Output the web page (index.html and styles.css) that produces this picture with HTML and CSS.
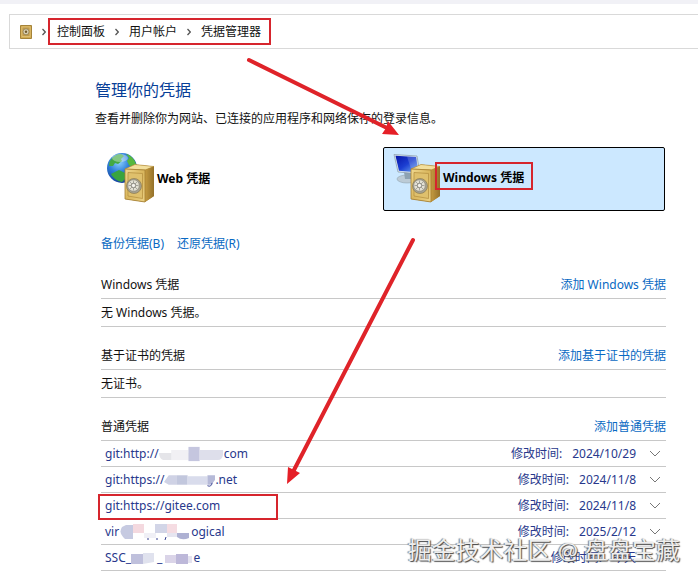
FILE: index.html
```html
<!DOCTYPE html>
<html lang="zh-CN">
<head>
<meta charset="utf-8">
<title>凭据管理器</title>
<link rel="stylesheet" href="styles.css">
</head>
<body>
<svg class="defs" aria-hidden="true">
  <defs>
    <linearGradient id="gold" x1="0" y1="0" x2="1" y2="1"><stop offset="0" stop-color="#f0d990"/><stop offset=".5" stop-color="#d9b65c"/><stop offset="1" stop-color="#ecd286"/></linearGradient>
    <linearGradient id="side" x1="0" y1="0" x2="1" y2="0"><stop offset="0" stop-color="#c59b40"/><stop offset="1" stop-color="#94712a"/></linearGradient>
    <radialGradient id="sea" cx=".4" cy=".3" r=".75"><stop offset="0" stop-color="#8fd4ff"/><stop offset=".45" stop-color="#2f7fd8"/><stop offset="1" stop-color="#123a94"/></radialGradient>
    <linearGradient id="screen" x1="0" y1="0" x2="1" y2="1"><stop offset="0" stop-color="#0714a8"/><stop offset=".5" stop-color="#1c3fd2"/><stop offset="1" stop-color="#78b4f4"/></linearGradient>
    <g id="safe">
      <path d="M18 17 28 12.500 47 14.500V44L38 50 18 47Z" fill="#a67d2a"/>
      <path d="M18 17 28 12.500 47 14.500 38 18Z" fill="#f2df9d" stroke="#b18a38" stroke-width=".6"/>
      <path d="M38 18 47 14.500V44L38 50Z" fill="url(#side)"/>
      <path d="M18 17 38 18V50L18 47Z" fill="url(#gold)" stroke="#a57f34" stroke-width=".8"/>
      <path d="M21 20.500 35.500 21.500V46.500L21 44Z" fill="#dfc06c" stroke="#b28d3c" stroke-width=".7"/>
      <circle cx="27" cy="34" r="7.500" fill="#a5a190" stroke="#8d7a4d" stroke-width=".7"/>
      <circle cx="26.500" cy="33.500" r="5.800" fill="#e2e0d4" stroke="#8e897a" stroke-width=".7"/>
      <path d="M26.500 28.500V38.500M21.500 33.500H31.500M23 30 30 37M30 30 23 37" stroke="#8d8c85" stroke-width=".7"/>
      <circle cx="26.500" cy="33.500" r="2.200" fill="#f4f3ed" stroke="#76746b" stroke-width=".8"/>
    </g>
  </defs>
</svg>

<header class="address">
  <svg class="address-icon" viewBox="0 0 12 14" aria-hidden="true"><path d="M.5.5h11v13H.5Z" fill="#d2ac52" stroke="#a58339"/><path d="M2 2h8v9.500H2Z" fill="#c09b49" stroke="#e8cf8b" stroke-width=".6"/><circle cx="6" cy="6.800" r="3" fill="#d9cfb1" stroke="#8b784c" stroke-width=".7"/><circle cx="6" cy="6.800" r="1.200" fill="#725b2b"/></svg>
  <svg class="crumb-sep" viewBox="0 0 4 8" aria-hidden="true"><path d="M.5 1 3.300 4 .5 7"/></svg>
  <nav class="crumbs marked" aria-label="路径">
    <a href="#">控制面板</a>
    <svg class="crumb-sep" viewBox="0 0 4 8" aria-hidden="true"><path d="M.5 1 3.300 4 .5 7"/></svg>
    <a href="#">用户帐户</a>
    <svg class="crumb-sep" viewBox="0 0 4 8" aria-hidden="true"><path d="M.5 1 3.300 4 .5 7"/></svg>
    <a href="#">凭据管理器</a>
  </nav>
</header>

<main class="content">
  <h1>管理你的凭据</h1>
  <p class="intro">查看并删除你为网站、已连接的应用程序和网络保存的登录信息。</p>

  <div class="tiles">
    <button class="tile" type="button">
      <svg class="tile-icon" viewBox="0 0 48 54" aria-hidden="true">
        <circle cx="15" cy="16" r="15" fill="url(#sea)"/>
        <path d="M2.500 10C5 5 9 2 14 2L17 4 14 7 15 9 11 12 8 11 6 14 2 14Z" fill="#43a944"/>
        <path d="M19 2C24 3 28 8 29.500 13L26 16 22 13 20 9 22 6Z" fill="#56b83f"/>
        <path d="M6 21 12 18 18 21 20 25 15 30C10 29 6 26 4 22Z" fill="#39a43e"/>
        <ellipse cx="13" cy="6" rx="8" ry="4" fill="#fff" opacity=".35"/>
        <use href="#safe"/>
      </svg>
      <span class="tile-label">Web 凭据</span>
    </button>
    <button class="tile selected" type="button">
      <svg class="tile-icon" viewBox="0 0 48 54" aria-hidden="true">
        <ellipse cx="14" cy="27" rx="10" ry="4" fill="#bccbd6" stroke="#92a4b0" stroke-width=".6"/>
        <path d="M11 20h7l2 7h-8Z" fill="#8da2b2"/>
        <path d="M1 2.500 24 4 27 22 5 20Z" fill="#d9e4ed" stroke="#8799a8" stroke-width=".7"/>
        <path d="M2.500 3.800 23 5 25.500 20.500 6 18.700Z" fill="url(#screen)"/>
        <path d="M14 4.500 23 5 25.500 20.500 19 20Z" fill="#fff" opacity=".17"/>
        <use href="#safe"/>
      </svg>
      <span class="tile-label marked">Windows 凭据</span>
    </button>
  </div>

  <div class="lists">
    <div class="actions"><a href="#">备份凭据(B)</a><a href="#">还原凭据(R)</a></div>

    <section>
      <div class="list-head"><h2>Windows 凭据</h2><a href="#">添加 Windows 凭据</a></div>
      <p class="empty">无 Windows 凭据。</p>
    </section>
    <section>
      <div class="list-head"><h2>基于证书的凭据</h2><a href="#">添加基于证书的凭据</a></div>
      <p class="empty">无证书。</p>
    </section>
    <section>
      <div class="list-head"><h2>普通凭据</h2><a href="#">添加普通凭据</a></div>
      <ul class="entries">
        <li class="entry">
          <span class="name">git:http://<svg class="mosaic wide" viewBox="0 0 64 14" aria-hidden="true"><path d="M0 6h29v7H4Q0 11 0 6Z" fill="#e5e5e9"/><path d="M12 3h17v10H12Z" fill="#f1f0f4"/><path d="M29 0h11v14H29Z" fill="#c5c6df"/><path d="M40 3h23v5q-1 5-5 5H40Z" fill="#dedfeb"/></svg>com</span>
          <span class="label">修改时间:</span><time>2024/10/29</time>
          <button class="expand" type="button" aria-label="展开"><svg viewBox="0 0 12 8" aria-hidden="true"><path d="M1 1 6 6 11 1"/></svg></button>
        </li>
        <li class="entry">
          <span class="name">git:https://<svg class="mosaic medium" viewBox="0 0 54 14" aria-hidden="true"><path d="M5 2h8v10H5L0 9Z" fill="#cfd2e5"/><path d="M13 2h12v10H13Z" fill="#c2c7dd"/><path d="M25 3h21v9H25Z" fill="#d9dcec"/><path d="M46 2h8v5l-4 5h-4Z" fill="#b6bad8"/><path d="M46 13q4 2 5-3" fill="none" stroke="#353f91"/></svg>.net</span>
          <span class="label">修改时间:</span><time>2024/11/8</time>
          <button class="expand" type="button" aria-label="展开"><svg viewBox="0 0 12 8" aria-hidden="true"><path d="M1 1 6 6 11 1"/></svg></button>
        </li>
        <li class="entry highlighted">
          <span class="name">git:https://gitee.com</span>
          <span class="label">修改时间:</span><time>2024/11/8</time>
          <button class="expand" type="button" aria-label="展开"><svg viewBox="0 0 12 8" aria-hidden="true"><path d="M1 1 6 6 11 1"/></svg></button>
        </li>
        <li class="entry">
          <span class="name">vir<svg class="mosaic widest" viewBox="0 0 70 16" aria-hidden="true"><path d="M6 1h7v14H5Q-2 9 2 3Z" fill="#c6cae1"/><path d="M13 0h11v9H13Z" fill="#f4d9df"/><path d="M24 9h12v5H24Z" fill="#f0f0f6"/><path d="M35 0h12v9H35Z" fill="#d2d5e7"/><path d="M47 0h10v9H47Z" fill="#f5dce2"/><path d="M47 9h10v4H47Z" fill="#e6e5f0"/><path d="M57 9h12v5q-7 3-12-1Z" fill="#aeb1d3"/><path d="M28 14v2M37 14v2M46 13l-1 3" stroke="#353f91"/></svg>ogical</span>
          <span class="label">修改时间:</span><time>2025/2/12</time>
          <button class="expand" type="button" aria-label="展开"><svg viewBox="0 0 12 8" aria-hidden="true"><path d="M1 1 6 6 11 1"/></svg></button>
        </li>
        <li class="entry">
          <span class="name">SSC_<svg class="mosaic small" viewBox="0 0 26 14" aria-hidden="true"><path d="M0 3h12v10H0Z" fill="#bfc0dc"/><path d="M12 2h11v9l-11 2Z" fill="#e0e2ee"/></svg>_<svg class="mosaic small-wide" viewBox="0 0 31 14" aria-hidden="true"><path d="M3 4h11v8H3Z" fill="#dad4e8"/><path d="M14 3h12v10H14Z" fill="#bdb8d9"/><path d="M26 5h4v7h-4Z" fill="#e4e2ef"/></svg>e</span>
          <span class="label">修改时间:</span><time>今天</time>
          <span class="expand"></span>
        </li>
      </ul>
    </section>
  </div>
</main>

<svg class="arrows" viewBox="0 0 698 582" aria-hidden="true">
  <path class="shaft" d="M249 60 387 128M413 240 294 470"/>
  <path class="head" d="M399 135 382 134 386 128 388 121ZM287 484 288 467 294 470 300 473Z"/>
</svg>
<div class="watermark">掘金技术社区 @ 盘盘宝藏</div>
</body>
</html>
```
FILE: styles.css
```css
*, *::after { box-sizing: border-box; }

body {
  position: relative;
  margin: 0;
  border-top: 4px solid #f1f1f6;
  background: #fff;
  color: #111;
  font: 12px/20px "Noto Sans", "Noto Sans CJK SC", sans-serif;
  overflow-x: hidden;
}

h1, h2, p, ul { margin: 0; padding: 0; font-size: 12px; font-weight: 400; }
a { color: #0869c3; text-decoration: none; }
button { font: inherit; color: inherit; }
.defs { position: absolute; width: 0; height: 0; }
.marked { border: 2px solid #d6252d; }

.address {
  display: flex;
  align-items: center;
  height: 35px;
  margin: 10px 0 0 9px;
  padding-left: 10px;
  border: 1px solid #d9d9d9;
  border-right: 0;
}
.address-icon { width: 12px; height: 14px; margin-right: 10px; }
.crumb-sep { width: 4px; height: 8px; fill: none; stroke: #555; stroke-width: 1.3; }
.crumbs {
  display: flex;
  align-items: center;
  gap: 10px;
  height: 27px;
  margin-left: 2px;
  padding: 0 8px 0 7px;
}
.crumbs a { color: #111; }

.content { padding: 29px 32px 11px 95px; }
h1 { color: #073e97; font-size: 16px; line-height: 24px; }
.intro { margin-top: 7px; }

.tiles {
  display: grid;
  grid-template-columns: 1fr 1fr;
  gap: 4px;
  margin: 18px 1px 0 2px;
}
.tile {
  display: flex;
  align-items: center;
  height: 64px;
  padding: 0 9px;
  border: 1px solid transparent;
  border-radius: 2px;
  background: none;
  color: #000;
  font-weight: 700;
}
.tile.selected { border-color: #000; background: #cce8ff; }
.tile-icon { width: 48px; height: 54px; }
.tile-label { padding: 0 2px; }
.tile-label.marked { margin: -6px 0 0 -6px; padding: 4px 7px 0 6px; }

.lists { margin-left: 6px; }
.actions { display: flex; gap: 13px; padding-top: 23px; }
.list-head {
  display: flex;
  justify-content: space-between;
  padding: 19px 0 3px;
  border-bottom: 1px solid #c8c8c8;
}
.actions + section { margin-top: 2px; }
.empty { padding: 4px 0 3px; border-bottom: 1px solid #c8c8c8; }

.entries { list-style: none; }
.entry {
  position: relative;
  display: flex;
  align-items: center;
  height: 26px;
  padding: 0 4px;
  border-bottom: 1px solid #c8c8c8;
  color: #28388c;
}
.highlighted::after {
  content: "";
  position: absolute;
  top: 1px;
  left: -3px;
  width: 180px;
  height: 26px;
  border: 2px solid #d6252d;
}
.name { display: flex; align-items: center; margin-right: auto; }
.label { margin-right: 10px; }
.expand {
  display: flex;
  justify-content: center;
  width: 14px;
  margin-left: 12px;
  padding: 0;
  border: 0;
  background: none;
}
.expand svg { width: 12px; height: 8px; fill: none; stroke: #777; }
.mosaic { height: 16px; }
.wide { width: 65px; }
.medium { width: 51px; }
.widest { width: 72px; }
.small { width: 26px; }
.small-wide { width: 31px; }

.arrows {
  position: absolute;
  top: -4px;
  left: 0;
  width: 698px;
  height: 582px;
  pointer-events: none;
}
.shaft { fill: none; stroke: #df2329; stroke-width: 4; stroke-linecap: round; }
.head { fill: #e51f27; }

.watermark {
  position: absolute;
  right: 18px;
  bottom: 16px;
  color: #eee;
  font: 24px/32px Lato, "Noto Sans CJK SC", sans-serif;
  white-space: nowrap;
  text-shadow: 1px 1px 1px #444, -1px 0 1px #777;
  pointer-events: none;
}
```
